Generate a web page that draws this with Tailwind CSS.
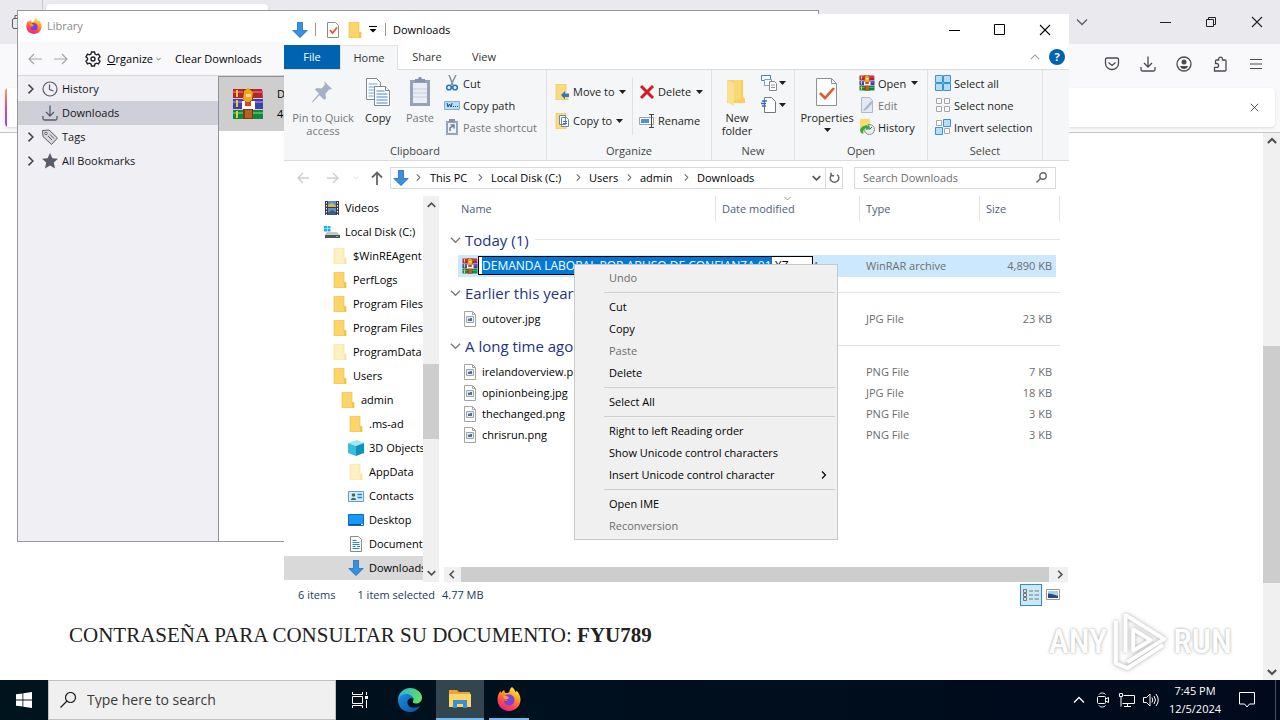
<!DOCTYPE html>
<html lang="en">
<head>
  <meta charset="UTF-8" />
  <meta name="viewport" content="width=device-width, initial-scale=1.0" />
  <title>Desktop</title>
  <script src="https://cdn.jsdelivr.net/npm/@tailwindcss/browser@4"></script>
</head>
<body class="h-screen flex flex-col overflow-hidden bg-white font-['Open_Sans','Noto_Sans',sans-serif] text-[11px] leading-4 text-black">

<!-- Shared icons -->
<svg class="absolute w-0 h-0" aria-hidden="true">
  <defs><linearGradient id="ff" x1=".8" y1="0" x2=".3" y2="1"><stop offset="0" stop-color="#fff04a"/><stop offset=".4" stop-color="#ff9a1f"/><stop offset=".7" stop-color="#ff4a4a"/><stop offset="1" stop-color="#e8228f"/></linearGradient></defs>
  <symbol id="folder" viewBox="0 0 16 16"><path d="M2 0h10v11l2-1v6H2z" fill="#fbd568"/><path d="M2 0h10v11l2-1v6H2z" fill="none" stroke="#efc14c" stroke-width=".7"/><path d="M12 10.500l2-.8V16h-2z" fill="#f2c24d"/></symbol>
  <symbol id="folder-pale" viewBox="0 0 16 16"><path d="M2 0h10v11l2-1v6H2z" fill="#fdf0c0" stroke="#f5e2a0" stroke-width=".7"/><path d="M12 10.500l2-.8V16h-2z" fill="#f9e4a5"/></symbol>
  <symbol id="down-arrow" viewBox="0 0 16 16"><path d="M5 0h6v8h5l-8 8-8-8h5z" fill="#3b8fdc"/><path d="M5.500.5h5v8H15L8 15.300 1 8.500h4.500z" fill="none" stroke="#2f7fca" stroke-width=".8"/></symbol>
  <symbol id="rar" viewBox="0 0 32 32">
    <path d="M1 1h29l1 9H1z" fill="#b3242f"/><path d="M1 3h30v2H1z" fill="#df5350"/>
    <path d="M1 11h30v10H1z" fill="#4040a8"/><path d="M1 13h30v2H1z" fill="#7474d8"/>
    <path d="M1 22h30v9H1z" fill="#14853c"/><path d="M1 24h30v2H1z" fill="#3fbb5a"/>
    <path d="M4 2h2v7H4zM4 12h2v7H4zM4 23h2v7H4z" fill="#f5c93e"/>
    <path d="M11 1h10v30H11z" fill="#7a3a18"/><path d="M12 3l4-3 5 4-1 8-4 3-5-3z" fill="#f5a31f"/><path d="M14 6h5v3h-5z" fill="#ffe28a"/>
    <path d="M10 13h3v5h6v-5h4v8H10z" fill="#fff"/><path d="M13 14h6v4h-6z" fill="#cf4a20"/><path d="M13 22h7v8h-7z" fill="#b8601f"/>
  </symbol>
  <symbol id="pic" viewBox="0 0 16 16"><path d="M2.500.5h8l3 3v12h-11z" fill="#fff" stroke="#a4a4a4"/><path d="M10.500.5v3h3" fill="none" stroke="#a4a4a4"/><path d="M4.500 5.500h7v6h-7z" fill="#e8eef5" stroke="#9aa3b0"/><path d="M6 7h4v3H6z" fill="#56708d"/><path d="M6 7h2v1H6z" fill="#a8c8e8"/></symbol>
  <symbol id="caret" viewBox="0 0 7 4"><path d="M0 0h7L3.500 4z" fill="currentColor"/></symbol>
  <symbol id="chev-r" viewBox="0 0 8 8"><path d="M2 .5L5.500 4 2 7.500" fill="none" stroke="currentColor" stroke-width="1.200"/></symbol>
  <symbol id="chev-d" viewBox="0 0 12 8"><path d="M1 1.500l5 5 5-5" fill="none" stroke="currentColor" stroke-width="1.300"/></symbol>
  <symbol id="chev-u" viewBox="0 0 12 8"><path d="M1 6.500l5-5 5 5" fill="none" stroke="currentColor" stroke-width="1.300"/></symbol>
  <symbol id="close" viewBox="0 0 12 12"><path d="M1 1l10 10M11 1L1 11" stroke="currentColor" stroke-width="1.100"/></symbol>
  <symbol id="download" viewBox="0 0 16 16"><path d="M8 .5v10M4 7l4 4 4-4M1 11v2.500a1.500 1.500 0 001.500 1.500h11a1.500 1.500 0 001.500-1.500V11" fill="none" stroke="currentColor" stroke-width="1.300"/></symbol>
  <symbol id="firefox" viewBox="0 0 24 24">
    <path d="M15 0c2 2 3 3 3.500 5 1-.3 1-1 1-1.500C22 6 23.500 9 23.500 12.500 23.500 19 18.500 24 12 24S.5 19 .5 12.500c0-3.500 1-6.500 3-8.500 0 1 .3 1.700.8 2 .6-1.400 1.700-2.500 3-3 0 1.400.4 2.300 1.300 3 2 .2 2.400-.3 3.800-1 0-2 .8-4 2.600-5z" fill="url(#ff)"/>
    <path d="M9 8c4-1.500 8.500.5 8.500 5a5.300 5.300 0 01-10.600.5c1.500 1 3.300.5 4.100-.5-2.500 0-3.500-1.500-5-2.500 1.200-.2 2.200-1 3-2.500z" fill="#7d3fe0"/><path d="M6 9c2-.5 4 0 6 1.500-1 2-3 2-5 1z" fill="#ffa32b"/>
  </symbol>
</svg>

<main class="relative flex-1 min-h-0 flex flex-col">

  <!-- Browser behind everything -->
  <div class="h-11 bg-[#eaeaee] flex items-stretch text-[#5b5b66]">
    <div class="w-[43px] border-r border-[#c9c9cf] flex items-center pl-3"><svg class="w-3 h-4" viewBox="0 0 12 16" fill="none" stroke="currentColor"><rect x=".5" y="4.500" width="10" height="10" rx="1.500"/><path d="M3 4V1.500h8"/></svg></div>
    <div class="ml-[3px] mt-1 w-[222px] rounded bg-white shadow"></div>
    <div class="ml-auto flex items-center pr-[17px] text-[#222]">
      <button aria-label="List all tabs" class="mr-[72px]"><svg class="w-3 h-2 text-[#5b5b66]"><use href="#chev-d"/></svg></button>
      <button aria-label="Minimize" class="mr-[34px]"><svg class="w-[11px] h-3" viewBox="0 0 11 12"><path d="M0 6.500h11" stroke="currentColor"/></svg></button>
      <button aria-label="Restore" class="mr-[34px]"><svg class="w-3 h-3" viewBox="0 0 12 12" fill="none" stroke="currentColor"><path d="M1.500 3.500h7v7h-7zM3.500 3.500v-2h7v7h-2"/></svg></button>
      <button aria-label="Close"><svg class="w-3 h-3"><use href="#close"/></svg></button>
    </div>
  </div>
  <div class="h-11 shrink-0 bg-[#f9f9fb] flex items-center justify-end gap-5 pr-4 pb-1 text-[#4a4a52]">
    <button aria-label="Pocket"><svg class="w-4 h-4" viewBox="0 0 16 16" fill="none" stroke="currentColor" stroke-width="1.300"><path d="M3 2h10a1.500 1.500 0 011.500 1.500V7.500a6.500 6 0 01-13 0v-4A1.500 1.500 0 013 2zM4.500 6.500L8 9.500l3.500-3"/></svg></button>
    <button aria-label="Downloads"><svg class="w-4 h-4"><use href="#download"/></svg></button>
    <button aria-label="Account"><svg class="w-4 h-4" viewBox="0 0 16 16"><circle cx="8" cy="8" r="7" fill="none" stroke="currentColor" stroke-width="1.300"/><circle cx="8" cy="6" r="2.500" fill="currentColor"/><path d="M4 10h8c-.5 2-2 3-4 3s-3.500-1-4-3z" fill="currentColor"/></svg></button>
    <button aria-label="Extensions"><svg class="w-4 h-4" viewBox="0 0 16 16" fill="none" stroke="currentColor" stroke-width="1.300"><path d="M2.500 15H13a1 1 0 001-1V5a1 1 0 00-1-1h-2.500V3a1.900 1.900 0 00-3.800 0v1H4.500a1 1 0 00-1 1v2.500h1.200a1.900 1.900 0 010 3.800H2.500z"/></svg></button>
    <button aria-label="Menu"><svg class="w-4 h-4" viewBox="0 0 16 16" stroke="currentColor" stroke-width="1.200"><path d="M2 3.500h12M2 8h12M2 12.500h12"/></svg></button>
  </div>
  <div class="h-[45px] shrink-0 bg-[#f9f9fb] border-b border-[#c4c4c8] pl-[5px] pr-[5px]">
    <div class="h-[39px] flex items-stretch bg-white rounded shadow overflow-hidden text-[#333]">
      <span class="w-[2px] bg-linear-to-b from-[#ff9a5a] via-[#e0409a] to-[#9a3fd8]"></span>
      <button aria-label="Dismiss" class="ml-auto mr-4"><svg class="w-[9px] h-[9px]"><use href="#close"/></svg></button>
    </div>
  </div>
  <div class="flex-1 min-h-0 flex">
    <article class="flex-1 flex items-end pl-[69px] pb-[33px] font-['Liberation_Serif',serif] text-[21px] leading-6 text-[#222]">
      <p>CONTRASEÑA PARA CONSULTAR SU DOCUMENTO: <b>FYU789</b></p>
    </article>
    <div class="w-[17px] bg-[#f0f0f0] flex flex-col items-center py-1 text-[#505050]">
      <svg class="w-[10px] h-2" viewBox="0 0 12 8"><path d="M1 6.500l5-5 5 5" fill="none" stroke="currentColor" stroke-width="2.500"/></svg>
      <div class="mt-[201px] w-full h-[237px] bg-[#cdcdcd]"></div>
      <svg class="mt-auto w-[10px] h-2" viewBox="0 0 12 8"><path d="M1 1.500l5 5 5-5" fill="none" stroke="currentColor" stroke-width="2.500"/></svg>
    </div>
  </div>

  <!-- Library window -->
  <section class="absolute left-[17px] top-[10px] w-[802px] h-[532px] border border-[#96969c] bg-white flex flex-col">
    <header class="h-[31px] shrink-0 flex items-center gap-[5px] pl-2 pb-[2px] text-[#8a8a8a]">
      <svg class="w-4 h-4"><use href="#firefox"/></svg><h2>Library</h2>
    </header>
    <div class="h-[34px] shrink-0 bg-[#f9f9fb] border-b border-[#d5d5da] flex items-center pl-[10px]">
      <button aria-label="Back" class="mr-3"><svg class="w-[14px] h-3 text-[#a5a5aa]" viewBox="0 0 14 12" fill="none" stroke="currentColor" stroke-width="1.200"><path d="M14 6H1M6 1L1 6l5 5"/></svg></button>
      <button aria-label="Forward" class="mr-[17px]"><svg class="w-[14px] h-3 text-[#a5a5aa]" viewBox="0 0 14 12" fill="none" stroke="currentColor" stroke-width="1.200"><path d="M0 6h13M8 1l5 5-5 5"/></svg></button>
      <button class="flex items-center mr-[14px]">
        <svg class="w-4 h-4 mr-[6px]" viewBox="0 0 16 16" fill="none" stroke="#222" stroke-width="1.400"><path d="M6.500 1h3l.5 2 1.500.8 2-.6 1.500 2.600-1.500 1.400v1.600l1.500 1.400-1.500 2.600-2-.6-1.500.8-.5 2h-3L6 13l-1.500-.8-2 .6L1 10.200l1.500-1.400V7.200L1 5.800l1.500-2.600 2 .6L6 3z"/><circle cx="8" cy="8" r="2"/></svg>
        <span><u>O</u>rganize</span>
        <svg class="w-[5px] h-1 ml-[3px]"><use href="#chev-d"/></svg>
      </button>
      <button>Clear Downloads</button>
    </div>
    <div class="flex-1 flex min-h-0">
      <ul class="w-[201px] shrink-0 bg-[#f0f0f4] border-r border-[#8f8f96] pt-px text-[#15141a]">
        <li class="h-6 flex items-center pl-2"><svg class="w-[10px] h-[10px] mr-[6px] text-[#444]"><use href="#chev-r"/></svg><svg class="w-4 h-4 mr-1" viewBox="0 0 16 16" fill="none" stroke="#5b5b66" stroke-width="1.200"><circle cx="8" cy="8" r="7"/><path d="M7.500 3.500v5l4 1.500"/></svg>History</li>
        <li class="h-6 flex items-center pl-6 bg-[#cfcfd8]"><svg class="w-4 h-4 mr-1 text-[#5b5b66]"><use href="#download"/></svg>Downloads</li>
        <li class="h-6 flex items-center pl-2"><svg class="w-[10px] h-[10px] mr-[6px] text-[#444]"><use href="#chev-r"/></svg><svg class="w-4 h-4 mr-1" viewBox="0 0 16 16" fill="#d8d8dc" stroke="#5b5b66"><path d="M.5 1.500L7 1l8.500 8-6 6.500L1 7.500z"/><circle cx="4" cy="4.500" r="1.200" fill="#fff"/><path d="M6 7l4 4M8 5.500l4 4"/></svg>Tags</li>
        <li class="h-6 flex items-center pl-2"><svg class="w-[10px] h-[10px] mr-[6px] text-[#444]"><use href="#chev-r"/></svg><svg class="w-4 h-4 mr-1" viewBox="0 0 16 16" fill="#5b5b66"><path d="M8 0l2.400 5.200 5.600.6-4.200 3.800L13 15.500 8 12.600 3 15.500l1.200-5.900L0 5.800l5.600-.6z"/></svg>All Bookmarks</li>
      </ul>
      <div class="flex-1 border-t border-[#8f8f96]">
        <div class="h-[54px] bg-[#cecece] flex items-center pl-[13px] gap-[13px]">
          <svg class="w-8 h-8"><use href="#rar"/></svg>
          <p class="leading-5">DEMANDA<br>4.8 MB</p>
        </div>
      </div>
    </div>
  </section>

  <!-- File Explorer window -->
  <section class="absolute left-[284px] top-[14px] w-[785px] h-[593px] bg-white flex flex-col">
    <header class="h-[31px] shrink-0 flex items-center pl-2">
      <svg class="w-4 h-4"><use href="#down-arrow"/></svg>
      <span class="ml-[7px] h-[13px] border-l border-[#999]"></span>
      <svg class="ml-[9px] w-4 h-4" viewBox="0 0 16 16"><path d="M2.500.5h8l3 3v12h-11z" fill="#fff" stroke="#8c8c8c"/><path d="M5 8l2.500 3L12 5.500" fill="none" stroke="#e0592f" stroke-width="1.800"/></svg>
      <svg class="ml-[6px] w-4 h-4"><use href="#folder"/></svg>
      <svg class="ml-[6px] w-2 h-[7px]" viewBox="0 0 8 7"><path d="M0 .5h8" stroke="#000"/><path d="M.5 3h7L4 6.500z"/></svg>
      <span class="ml-2 h-[13px] border-l border-[#999]"></span>
      <h2 class="ml-[7px]">Downloads</h2>
      <div class="ml-auto flex items-center pr-[18px]">
        <button aria-label="Minimize" class="mr-[34px]"><svg class="w-[11px] h-3" viewBox="0 0 11 12"><path d="M0 6.500h11" stroke="#000"/></svg></button>
        <button aria-label="Maximize" class="mr-[34px]"><svg class="w-[11px] h-[11px]" viewBox="0 0 11 11"><path d="M.5.5h10v10H.5z" fill="none" stroke="#000"/></svg></button>
        <button aria-label="Close"><svg class="w-3 h-3"><use href="#close"/></svg></button>
      </div>
    </header>

    <nav class="h-6 shrink-0 flex text-[#333]">
      <button class="w-14 bg-[#0063b1] text-white">File</button>
      <button class="w-[58px] -mb-px relative bg-[#f5f6f7] border-x border-t border-[#e2e3e4]">Home</button>
      <button class="w-[58px]">Share</button>
      <button class="w-[56px]">View</button>
      <div class="ml-auto flex items-center gap-[9px] pr-1">
        <button aria-label="Collapse ribbon"><svg class="w-[10px] h-2 text-[#999]"><use href="#chev-u"/></svg></button>
        <button class="w-4 h-4 rounded-full bg-[#0063b1] text-white font-bold leading-4" aria-label="Help">?</button>
      </div>
    </nav>

    <!-- Ribbon -->
    <div class="h-[92px] shrink-0 bg-[#f5f6f7] border-y border-[#dadbdc] flex leading-[13px] text-[#1e1e1e] whitespace-nowrap">
      <div class="w-[263px] border-r border-[#e0e1e2] flex flex-col">
        <div class="h-[73px] flex pl-1 pt-[2px]">
          <button class="w-[70px] flex flex-col items-center justify-start text-[#777]">
            <svg class="w-8 h-8 mt-[5px] mb-[2px]" viewBox="0 0 32 32" fill="#a4b1c4"><path d="M17 4l8 8-3 .8-3.500 4 .5 5-2 1-4.500-4.500L6 25l-1 .5.5-1.500L12 16.500 8 12.500l1.500-1.500 5 .5 3.500-4z"/></svg>
            <span>Pin to Quick<br>access</span>
          </button>
          <button class="w-10 flex flex-col items-center justify-start">
            <svg class="w-8 h-8 mt-[5px] mb-[2px]" viewBox="0 0 32 32" fill="#fff" stroke="#7f8792"><path d="M4.500 1.500h10l4 4v17h-14z"/><path d="M6.500 7h9M6.500 10h9M6.500 13h9M6.500 16h9M6.500 19h5" stroke="#6aa3dd"/><path d="M12.500 9.500h11l4 4v15h-15z"/><path d="M23.500 9.500v4h4" /><path d="M14.500 14h8M14.500 17h11M14.500 20h11M14.500 23h11M14.500 26h11" stroke="#3c84d0"/></svg>
            <span>Copy</span>
          </button>
          <button class="w-11 flex flex-col items-center justify-start text-[#777]">
            <svg class="w-8 h-8 mt-[5px] mb-[2px]" viewBox="0 0 32 32"><path d="M6 3h20v26H6z" fill="#95a3b8"/><path d="M9 6h14v20H9z" fill="#e9edf5"/><path d="M11 5h10V2h-3l-1-2h-2l-1 2h-3z" fill="#8593a8"/><path d="M9 12h14M9 16h14M9 20h14" stroke="#c5cede"/></svg>
            <span>Paste</span>
          </button>
          <div class="flex flex-col pl-[2px]">
            <button class="h-[22px] flex items-center gap-[3px]"><svg class="w-4 h-4" viewBox="0 0 16 16" fill="none"><path d="M5 0l4 10M12 0L7 10" stroke="#8a8f98" stroke-width="1.500"/><circle cx="5" cy="12.500" r="2.300" stroke="#2779bd" stroke-width="1.600"/><circle cx="11" cy="12.500" r="2.300" stroke="#2779bd" stroke-width="1.600"/></svg>Cut</button>
            <button class="h-[22px] flex items-center gap-[3px]"><svg class="w-4 h-4" viewBox="0 0 16 16"><path d="M.5 4.500h15v8H.5z" fill="#b9dcf5" stroke="#7fb1dc"/><path d="M3 6l1 4 1.500-3L7 10l1-4" fill="none" stroke="#1b4d80"/><path d="M9 9.500h1M11 9.500h1M13 9.500h1" stroke="#1b4d80"/></svg>Copy path</button>
            <button class="h-[22px] flex items-center gap-[3px] text-[#777]"><svg class="w-4 h-4" viewBox="0 0 16 16"><path d="M2 2h12v14H2z" fill="#95a3b8"/><path d="M4 4h8v10H4z" fill="#eef1f7"/><path d="M5 0h6v3H5z" fill="#8593a8"/><path d="M6 12V9l3-2M6.500 6H10v3.500" fill="none" stroke="#6d7f9b" stroke-width="1.500"/></svg>Paste shortcut</button>
          </div>
        </div>
        <span class="text-center pt-px text-[#444]">Clipboard</span>
      </div>
      <div class="w-[165px] border-r border-[#e0e1e2] flex flex-col">
        <div class="h-[73px] flex pt-[7px] pl-2">
          <div class="w-[78px] border-r border-[#e0e1e2] flex flex-col h-[58px]">
            <button class="h-[29px] flex items-center gap-[2px]"><svg class="w-4 h-4" viewBox="0 0 16 16"><path d="M1 0h10v11l2-1v6H1z" fill="#fbdc7c" stroke="#efc14c" stroke-width=".6"/><path d="M6 11l4-4v2.500h4v3.500h-4v2.500z" fill="#3279bd"/></svg>Move to<svg class="w-[7px] h-1 ml-[2px]"><use href="#caret"/></svg></button>
            <button class="h-[29px] flex items-center gap-[2px]"><svg class="w-4 h-4" viewBox="0 0 16 16"><path d="M1 0h10v16H1z" fill="#fbdc7c" stroke="#efc14c" stroke-width=".6"/><path d="M4.500 2.500h6v9h-6zM6.500 4.500h5l2 2v7h-7z" fill="#fff" stroke="#6a87aa"/><path d="M8 8.500h4M8 10.500h4" stroke="#3279bd"/></svg>Copy to<svg class="w-[7px] h-1 ml-[2px]"><use href="#caret"/></svg></button>
          </div>
          <div class="flex flex-col pl-[6px]">
            <button class="h-[29px] flex items-center gap-[3px]"><svg class="w-4 h-4" viewBox="0 0 16 16"><path d="M2 2l12 12M14 2L2 14" stroke="#d9181f" stroke-width="3"/></svg>Delete<svg class="w-[7px] h-1 ml-[2px]"><use href="#caret"/></svg></button>
            <button class="h-[29px] flex items-center gap-[3px]"><svg class="w-4 h-4" viewBox="0 0 16 16" fill="none"><path d="M.5 4.500h14v7H.5z" fill="#fff" stroke="#9aa3ad"/><path d="M2 6h8v4H2z" fill="#4695da"/><path d="M12.500 1.500v13M10 1.500h5M10 14.500h5" stroke="#444"/></svg>Rename</button>
          </div>
        </div>
        <span class="text-center pt-px text-[#444]">Organize</span>
      </div>
      <div class="w-[83px] border-r border-[#e0e1e2] flex flex-col">
        <div class="h-[73px] flex pt-[2px] pl-1">
          <button class="w-[42px] flex flex-col items-center justify-start">
            <svg class="w-8 h-8 mt-[5px] mb-[2px]" viewBox="0 0 32 32"><path d="M6 3h16v16l2 3v4H6z" fill="#f8cf5f"/><path d="M6 3l7 3v23l-7-4z" fill="#fbe092"/><path d="M13 3h7v20h-7z" fill="#fad871"/></svg>
            <span>New<br>folder</span>
          </button>
          <div class="flex flex-col pl-[3px]">
            <button aria-label="New item" class="h-[22px] flex items-center gap-[2px]"><svg class="w-4 h-4" viewBox="0 0 16 16" fill="#fff"><path d="M.5.5h9v5h-9z" stroke="#3a86c8" /><path d="M3.500 4.500h7v6h-7z" stroke="#6aa3dd"/><path d="M8.500 6.500h5l2 2v7h-7z" stroke="#888"/><path d="M10 10h4M10 12.500h4" stroke="#999"/></svg><svg class="w-[7px] h-1"><use href="#caret"/></svg></button>
            <button aria-label="Easy access" class="h-[22px] flex items-center gap-[2px]"><svg class="w-4 h-4" viewBox="0 0 16 16" fill="#fff"><path d="M3.500.5h7l4 4v11h-11z" stroke="#777"/><path d="M1 4h5M0 6.500h5M1 9h4" stroke="#2d72b8" stroke-width="1.400"/></svg><svg class="w-[7px] h-1"><use href="#caret"/></svg></button>
          </div>
        </div>
        <span class="text-center pt-px text-[#444]">New</span>
      </div>
      <div class="w-[133px] border-r border-[#e0e1e2] flex flex-col">
        <div class="h-[73px] flex pt-[2px] pl-1">
          <button class="w-[56px] flex flex-col items-center justify-start">
            <svg class="w-8 h-8 mt-[5px] mb-[2px]" viewBox="0 0 32 32"><path d="M5.500 1.500h15l5 5v22h-20z" fill="#fff" stroke="#909090"/><path d="M20.500 1.500v5h5" fill="none" stroke="#909090"/><path d="M9 16l5 5 9-10" fill="none" stroke="#e0592f" stroke-width="2.600"/></svg>
            <span>Properties</span>
            <svg class="w-[7px] h-1 mt-1"><use href="#caret"/></svg>
          </button>
          <div class="flex flex-col pl-1">
            <button class="h-[22px] flex items-center gap-[3px]"><svg class="w-4 h-4"><use href="#rar"/></svg>Open<svg class="w-[7px] h-1 ml-[2px]"><use href="#caret"/></svg></button>
            <button class="h-[22px] flex items-center gap-[3px] text-[#777]"><svg class="w-4 h-4" viewBox="0 0 16 16"><path d="M2.500.5h8l3 3v12h-11z" fill="#e3eaf5" stroke="#a9b9d0"/><path d="M5 12l7-8 2 2-7 7-3 1z" fill="#a9b9d0"/></svg>Edit</button>
            <button class="h-[22px] flex items-center gap-[3px]"><svg class="w-4 h-4" viewBox="0 0 16 16"><path d="M1 0h10v14H1z" fill="#fbdc6a"/><circle cx="10.500" cy="10.500" r="5" fill="#e8eef0" stroke="#8a9299"/><path d="M10.500 10.500L13 8" stroke="#555"/><path d="M1 11a6 6 0 018-4l1-2 1 5-4.500 1 1-2a4 4 0 00-3 6 5 5 0 01-3.500-4z" fill="#2fa84a"/></svg>History</button>
          </div>
        </div>
        <span class="text-center pt-px text-[#444]">Open</span>
      </div>
      <div class="w-[115px] border-r border-[#e0e1e2] flex flex-col">
        <div class="h-[73px] flex flex-col pt-[2px] pl-[7px]">
          <button class="h-[22px] flex items-center gap-[3px]"><svg class="w-4 h-4" viewBox="0 0 16 16" fill="#b5dcf8" stroke="#3a92d8"><path d="M.5.5h7v7h-7zM8.500.5h7v7h-7zM.5 8.500h7v7h-7zM8.500 8.500h7v7h-7z"/></svg>Select all</button>
          <button class="h-[22px] flex items-center gap-[3px]"><svg class="w-4 h-4" viewBox="0 0 16 16" fill="#fff" stroke="#a8a8a8"><path d="M1.500 1.500h5v5h-5zM9.500 1.500h5v5h-5zM1.500 9.500h5v5h-5zM9.500 9.500h5v5h-5z"/></svg>Select none</button>
          <button class="h-[22px] flex items-center gap-[3px]"><svg class="w-4 h-4" viewBox="0 0 16 16" fill="#b5dcf8" stroke="#3a92d8"><path d="M8.500.5h7v7h-7zM.5 8.500h7v7h-7z"/><path d="M1.500 1.500h5v5h-5zM9.500 9.500h5v5h-5z" fill="#fff" stroke="#a8a8a8"/></svg>Invert selection</button>
        </div>
        <span class="text-center pt-px text-[#444]">Select</span>
      </div>
    </div>

    <!-- Address bar -->
    <div class="h-[35px] shrink-0 flex items-center pb-[2px]">
      <div class="w-[106px] flex items-center pl-[13px] text-[#d0d0d0]">
        <button aria-label="Back"><svg class="w-3 h-3" viewBox="0 0 12 12" fill="none" stroke="currentColor" stroke-width="1.500"><path d="M12 6H1M6 1L1 6l5 5"/></svg></button>
        <button aria-label="Forward" class="ml-[18px]"><svg class="w-3 h-3" viewBox="0 0 12 12" fill="none" stroke="currentColor" stroke-width="1.500"><path d="M0 6h11M6 1l5 5-5 5"/></svg></button>
        <button aria-label="Recent locations" class="ml-[14px]"><svg class="w-[6px] h-1"><use href="#chev-d"/></svg></button>
        <button aria-label="Up" class="ml-3"><svg class="w-3 h-[14px] text-[#666]" viewBox="0 0 12 14" fill="none" stroke="currentColor" stroke-width="1.800"><path d="M6 14V2M1 6.500l5-5 5 5"/></svg></button>
      </div>
      <div class="w-[453px] h-[22px] border border-[#d9d9d9] flex items-center pl-[2px]">
        <svg class="w-4 h-4"><use href="#down-arrow"/></svg>
        <svg class="w-[7px] h-[7px] ml-[6px] mr-2 text-[#666]"><use href="#chev-r"/></svg>
        <a href="#" class="w-[40px]">This PC</a>
        <svg class="w-[7px] h-[7px] mx-[7px] text-[#666]"><use href="#chev-r"/></svg>
        <a href="#" class="w-[77px]">Local Disk (C:)</a>
        <svg class="w-[7px] h-[7px] mx-[7px] text-[#666]"><use href="#chev-r"/></svg>
        <a href="#" class="w-[30px]">Users</a>
        <svg class="w-[7px] h-[7px] mx-[7px] text-[#666]"><use href="#chev-r"/></svg>
        <a href="#" class="w-[36px]">admin</a>
        <svg class="w-[7px] h-[7px] mx-[7px] text-[#666]"><use href="#chev-r"/></svg>
        <a href="#">Downloads</a>
        <button aria-label="Previous locations" class="ml-auto mr-1 text-[#555]"><svg class="w-[9px] h-[6px]" viewBox="0 0 12 8"><path d="M1 1.500l5 5 5-5" fill="none" stroke="currentColor" stroke-width="2.200"/></svg></button>
        <button aria-label="Refresh" class="h-full w-[17px] border-l border-[#d9d9d9] flex items-center justify-center"><svg class="w-[11px] h-3" viewBox="0 0 11 12" fill="none" stroke="#666" stroke-width="1.500"><path d="M3 2.500a4.300 4.300 0 105 0M2 .8v3h3.200"/></svg></button>
      </div>
      <label class="ml-[11px] mr-[13px] flex-1 h-[22px] border border-[#d9d9d9] flex items-center pl-2 pr-2">
        <input type="text" aria-label="Search Downloads" placeholder="Search Downloads" class="flex-1 min-w-0 outline-none placeholder:text-[#6d6d6d]">
        <svg class="w-[11px] h-[11px]" viewBox="0 0 11 11" fill="none" stroke="#666" stroke-width="1.400"><circle cx="7" cy="4" r="3.200"/><path d="M4.500 6.500L.5 10.500"/></svg>
      </label>
    </div>

    <div class="flex-1 min-h-0 flex">
      <!-- Navigation tree -->
      <ul class="w-[139px] shrink-0 overflow-hidden whitespace-nowrap">
        <li class="h-6 flex items-center gap-[5px] pl-10"><svg class="w-4 h-4 shrink-0" viewBox="0 0 16 16"><path d="M1 1h14v14H1z" fill="#333c48"/><path d="M4 1h8v6H4zM4 8h8v7H4z" fill="#5b93c8"/><path d="M4 5l4-2 4 3v1H4z" fill="#e0b548"/><path d="M4 13l4-3 4 2v3H4z" fill="#3c5b7e"/><path d="M2.500 2v13M13.500 2v13" stroke="#fff" stroke-dasharray="1.500 1.500"/></svg>Videos</li>
        <li class="h-6 flex items-center gap-[5px] pl-10"><svg class="w-4 h-4 shrink-0" viewBox="0 0 16 16"><path d="M0 2h3v2.500H0zM3.500 2h3v2.500h-3zM0 5h3v2.500H0zM3.500 5h3v2.500h-3z" fill="#19b1e8"/><path d="M3 8h10l3 3H1z" fill="#c3c8cd"/><path d="M1 11h15v3H1z" fill="#4d5359"/><path d="M12 12h2v1h-2z" fill="#4bdc5a"/></svg>Local Disk (C:)</li>
        <li class="h-6 flex items-center gap-[5px] pl-12"><svg class="w-4 h-4 shrink-0"><use href="#folder-pale"/></svg>$WinREAgent</li>
        <li class="h-6 flex items-center gap-[5px] pl-12"><svg class="w-4 h-4 shrink-0"><use href="#folder"/></svg>PerfLogs</li>
        <li class="h-6 flex items-center gap-[5px] pl-12"><svg class="w-4 h-4 shrink-0"><use href="#folder"/></svg>Program Files</li>
        <li class="h-6 flex items-center gap-[5px] pl-12"><svg class="w-4 h-4 shrink-0"><use href="#folder"/></svg>Program Files (x86)</li>
        <li class="h-6 flex items-center gap-[5px] pl-12"><svg class="w-4 h-4 shrink-0"><use href="#folder-pale"/></svg>ProgramData</li>
        <li class="h-6 flex items-center gap-[5px] pl-12"><svg class="w-4 h-4 shrink-0"><use href="#folder"/></svg>Users</li>
        <li class="h-6 flex items-center gap-[5px] pl-14"><svg class="w-4 h-4 shrink-0"><use href="#folder"/></svg>admin</li>
        <li class="h-6 flex items-center gap-[5px] pl-16"><svg class="w-4 h-4 shrink-0"><use href="#folder"/></svg>.ms-ad</li>
        <li class="h-6 flex items-center gap-[5px] pl-16"><svg class="w-4 h-4 shrink-0" viewBox="0 0 16 16"><path d="M0 3l9-3 7 3-8 3z" fill="#a5e6f2"/><path d="M0 3l8 3v10l-8-3z" fill="#36bfdc"/><path d="M8 6l8-3v10l-8 3z" fill="#0e93ba"/></svg>3D Objects</li>
        <li class="h-6 flex items-center gap-[5px] pl-16"><svg class="w-4 h-4 shrink-0"><use href="#folder-pale"/></svg>AppData</li>
        <li class="h-6 flex items-center gap-[5px] pl-16"><svg class="w-4 h-4 shrink-0" viewBox="0 0 16 16"><path d="M.5 3.500h15v10H.5z" fill="#d7ebfa" stroke="#5f9fd0"/><path d="M3 12c0-3 5-3 5 0z" fill="#3d6e5a"/><circle cx="5.500" cy="7" r="1.800" fill="#3d6e5a"/><path d="M9.500 6.500h4.500M9.500 9.500h4.500" stroke="#2b7ec2" stroke-width="1.400"/></svg>Contacts</li>
        <li class="h-6 flex items-center gap-[5px] pl-16"><svg class="w-4 h-4 shrink-0" viewBox="0 0 16 16"><path d="M.5 2.500h15v11H.5z" fill="#1a98f5" stroke="#0d6ab8"/><path d="M1 12.500h12" stroke="#0a4d90"/><path d="M13 12.500h2" stroke="#fff"/></svg>Desktop</li>
        <li class="h-6 flex items-center gap-[5px] pl-16"><svg class="w-4 h-4 shrink-0" viewBox="0 0 16 16"><path d="M2.500.5h8l3 3v12h-11z" fill="#fff" stroke="#8c8c8c"/><path d="M4.500 4.500h4M4.500 6.500h7M4.500 8.500h7M4.500 10.500h3M4.500 12.500h7M9 10.500h3" stroke="#2b86c8"/></svg>Documents</li>
        <li class="h-6 flex items-center gap-[5px] pl-16 bg-[#d9d9d9]"><svg class="w-4 h-4 shrink-0"><use href="#down-arrow"/></svg>Downloads</li>
      </ul>
      <div class="w-4 shrink-0 bg-[#f0f0f0] flex flex-col items-center py-[5px] text-[#505050]">
        <svg class="w-[9px] h-2" viewBox="0 0 12 8"><path d="M1 6.500l5-5 5 5" fill="none" stroke="currentColor" stroke-width="2.200"/></svg>
        <div class="mt-[155px] w-full h-[75px] bg-[#cdcdcd]"></div>
        <svg class="mt-auto w-[9px] h-2" viewBox="0 0 12 8"><path d="M1 1.500l5 5 5-5" fill="none" stroke="currentColor" stroke-width="2.200"/></svg>
      </div>

      <!-- File list -->
      <div class="flex-1 min-w-0 flex flex-col pl-[5px]">
        <div class="flex-1 pl-[14px] text-[#6d6d6d]">
          <div class="relative h-7 grid grid-cols-[258px_144px_120px_80px] pb-[3px] text-[#4c607a]">
            <span class="pl-[3px] border-r border-[#e5e5e5] leading-[26px]">Name</span>
            <span class="pl-[6px] border-r border-[#e5e5e5] leading-[26px]">Date modified</span>
            <span class="pl-[6px] border-r border-[#e5e5e5] leading-[26px]">Type</span>
            <span class="pl-[6px] border-r border-[#e5e5e5] leading-[26px]">Size</span>
            <svg class="absolute left-[326px] top-0 w-[7px] h-[5px] text-[#777]"><use href="#chev-d"/></svg>
          </div>

          <div class="h-[31px] flex items-center -ml-2 mr-[9px] text-[15px] text-[#1e3287]"><svg class="w-[11px] h-2 mr-1 text-[#777]"><use href="#chev-d"/></svg>Today (1)<span class="flex-1 ml-[6px] border-t border-[#dfe3ea]"></span></div>
          <div class="relative h-[22px] grid grid-cols-[258px_144px_120px_76px] items-center bg-[#cce8ff] w-[598px]">
            <span class="flex items-center pl-1 text-black"><svg class="w-4 h-4"><use href="#rar"/></svg></span>
            <span class="pl-[6px]">12/5/2024 7:45 PM</span>
            <span class="pl-[6px]">WinRAR archive</span>
            <span class="text-right pr-1">4,890 KB</span>
            <input id="rename" type="text" aria-label="File name" value="DEMANDA LABORAL POR ABUSO DE CONFIANZA 01.XZ" class="absolute left-5 top-px w-[335px] h-[19px] border border-black bg-white px-[3px] text-[12px] text-black outline-none selection:bg-[#0078d7] selection:text-white">
          </div>

          <div class="h-[31px] flex items-center -ml-2 mr-[9px] text-[15px] text-[#1e3287]"><svg class="w-[11px] h-2 mr-1 text-[#777]"><use href="#chev-d"/></svg>Earlier this year (1)<span class="flex-1 ml-[6px] border-t border-[#dfe3ea]"></span></div>
          <div class="h-[22px] grid grid-cols-[258px_144px_120px_76px] items-center w-[598px]">
            <span class="flex items-center gap-1 pl-1 text-black"><svg class="w-4 h-4"><use href="#pic"/></svg>outover.jpg</span><span></span>
            <span class="pl-[6px]">JPG File</span><span class="text-right pr-1">23 KB</span>
          </div>

          <div class="h-[31px] flex items-center -ml-2 mr-[9px] text-[15px] text-[#1e3287]"><svg class="w-[11px] h-2 mr-1 text-[#777]"><use href="#chev-d"/></svg>A long time ago (4)<span class="flex-1 ml-[6px] border-t border-[#dfe3ea]"></span></div>
          <div class="h-[21px] grid grid-cols-[258px_144px_120px_76px] items-center w-[598px]">
            <span class="flex items-center gap-1 pl-1 text-black"><svg class="w-4 h-4"><use href="#pic"/></svg>irelandoverview.png</span><span></span>
            <span class="pl-[6px]">PNG File</span><span class="text-right pr-1">7 KB</span>
          </div>
          <div class="h-[21px] grid grid-cols-[258px_144px_120px_76px] items-center w-[598px]">
            <span class="flex items-center gap-1 pl-1 text-black"><svg class="w-4 h-4"><use href="#pic"/></svg>opinionbeing.jpg</span><span></span>
            <span class="pl-[6px]">JPG File</span><span class="text-right pr-1">18 KB</span>
          </div>
          <div class="h-[21px] grid grid-cols-[258px_144px_120px_76px] items-center w-[598px]">
            <span class="flex items-center gap-1 pl-1 text-black"><svg class="w-4 h-4"><use href="#pic"/></svg>thechanged.png</span><span></span>
            <span class="pl-[6px]">PNG File</span><span class="text-right pr-1">3 KB</span>
          </div>
          <div class="h-[21px] grid grid-cols-[258px_144px_120px_76px] items-center w-[598px]">
            <span class="flex items-center gap-1 pl-1 text-black"><svg class="w-4 h-4"><use href="#pic"/></svg>chrisrun.png</span><span></span>
            <span class="pl-[6px]">PNG File</span><span class="text-right pr-1">3 KB</span>
          </div>
        </div>
        <div class="h-[15px] mr-px shrink-0 bg-[#f0f0f0] flex items-center px-1 text-[#505050]">
          <svg class="w-2 h-[9px]" viewBox="0 0 8 12"><path d="M6.500 1l-5 5 5 5" fill="none" stroke="currentColor" stroke-width="2.200"/></svg>
          <div class="flex-1 h-full ml-[5px] mr-[7px] bg-[#cdcdcd]"></div>
          <svg class="w-2 h-[9px]" viewBox="0 0 8 12"><path d="M1.500 1l5 5-5 5" fill="none" stroke="currentColor" stroke-width="2.200"/></svg>
        </div>
      </div>
    </div>

    <footer class="h-[25px] shrink-0 flex items-center pl-[14px] pr-[9px] text-[#1e395b]">
      <span class="mr-[22px]">6 items</span><span class="mr-[7px]">1 item selected</span><span>4.77 MB</span>
      <button aria-label="Details view" class="ml-auto w-[22px] h-[22px] bg-[#cce8f6] border border-[#2a8dd4] flex items-center justify-center"><svg class="w-4 h-3" viewBox="0 0 16 12" fill="none" stroke="#777"><path d="M.5.5h3v3h-3zM.5 4.500h3v3h-3zM.5 8.500h3v3h-3zM6 2h4M11.500 2H16M6 6h4M11.500 6H16M6 10h4M11.500 10H16"/></svg></button>
      <button aria-label="Large icons" class="ml-1"><svg class="w-[14px] h-[11px]" viewBox="0 0 14 11"><path d="M.5.5h13v10H.5z" fill="#fff" stroke="#999"/><path d="M2 2h10v7H2z" fill="#a9cff2"/><path d="M2 4.500l4 .5 6 2v2H2z" fill="#2b4d7a"/></svg></button>
    </footer>
  </section>

  <!-- Context menu -->
  <div role="menu" class="absolute left-[574px] top-[264px] w-[264px] border border-[#c8c8c8] bg-[#f0f0f0] py-[2px] flex flex-col">
    <button disabled class="h-[22px] text-left pl-[34px] text-[#6d6d6d]">Undo</button>
    <hr class="my-[3px] ml-[29px] mr-[2px] border-[#cfcfcf]">
    <button class="h-[22px] text-left pl-[34px]">Cut</button>
    <button class="h-[22px] text-left pl-[34px]">Copy</button>
    <button disabled class="h-[22px] text-left pl-[34px] text-[#6d6d6d]">Paste</button>
    <button class="h-[22px] text-left pl-[34px]">Delete</button>
    <hr class="my-[3px] ml-[29px] mr-[2px] border-[#cfcfcf]">
    <button class="h-[22px] text-left pl-[34px]">Select All</button>
    <hr class="my-[3px] ml-[29px] mr-[2px] border-[#cfcfcf]">
    <button class="h-[22px] text-left pl-[34px]">Right to left Reading order</button>
    <button class="h-[22px] text-left pl-[34px]">Show Unicode control characters</button>
    <button class="h-[22px] flex items-center justify-between pl-[34px] pr-[9px]">Insert Unicode control character<svg class="w-2 h-2"><use href="#chev-r"/></svg></button>
    <hr class="my-[3px] ml-[29px] mr-[2px] border-[#cfcfcf]">
    <button class="h-[22px] text-left pl-[34px]">Open IME</button>
    <button disabled class="h-[22px] text-left pl-[34px] text-[#6d6d6d]">Reconversion</button>
  </div>

  <!-- Watermark -->
  <div class="absolute right-12 bottom-2 flex items-center gap-[5px] font-['Roboto_Condensed','Roboto',sans-serif] text-[34px] leading-[60px] font-medium text-white [text-shadow:0_0_3px_#999]">
    <span>ANY</span>
    <svg class="w-[56px] h-[62px] drop-shadow-[0_0_2px_#aaa]" viewBox="0 0 58 62" fill="none" stroke="#fff" stroke-width="4" stroke-linejoin="round"><path d="M14 3v40M14 4l40 25-38 24M4 10v44l12 5 37-24M22 19v22l18-11z"/></svg>
    <span>RUN</span>
  </div>
</main>

<!-- Taskbar -->
<footer class="h-10 shrink-0 bg-linear-to-r from-[#00141e] to-[#000a1c] flex items-stretch text-white">
  <button aria-label="Start" class="w-12 flex items-center justify-center"><svg class="w-4 h-4" viewBox="0 0 16 16" fill="#fff"><path d="M0 2.300l6.500-.9v6.200H0zM7.300 1.300L16 0v7.600H7.300zM0 8.400h6.500v6.200L0 13.700zM7.300 8.400H16V16l-8.700-1.300z"/></svg></button>
  <label class="w-72 bg-[#f0f0f0] border border-[#c0c0c0] flex items-center pl-[11px] gap-[11px]">
    <svg class="w-4 h-4" viewBox="0 0 16 16" fill="none" stroke="#222" stroke-width="1.200"><circle cx="10.500" cy="5.500" r="5"/><path d="M7 9l-6.500 6.500"/></svg>
    <input type="text" aria-label="Search" placeholder="Type here to search" class="flex-1 min-w-0 text-[14px] outline-none placeholder:text-[#3a3a3a]">
  </label>
  <button aria-label="Task view" class="w-12 flex items-center justify-center"><svg class="w-4 h-4" viewBox="0 0 16 16" fill="none" stroke="#fff"><path d="M.5 4.500h10v7H.5zM.5 0v2.500h10V0M.5 16v-2.500h10V16M14.500 0v3M14.500 8v8"/><path d="M13 4h3v3h-3z" fill="#fff" stroke="none"/></svg></button>
  <button aria-label="Edge" class="w-[52px] flex items-center justify-center"><svg class="w-6 h-6" viewBox="0 0 24 24"><defs><linearGradient id="e1" x1="0" y1="0" x2="1" y2=".3"><stop offset="0" stop-color="#2aa8e0"/><stop offset="1" stop-color="#5ee06a"/></linearGradient><linearGradient id="e2" x1="0" y1="0" x2="1" y2="1"><stop offset="0" stop-color="#1b8fe0"/><stop offset="1" stop-color="#0c4f9e"/></linearGradient></defs><path d="M0 12C0 5 5.500 0 12 0s12 4.500 12 9.500c0 4-3 6-6 6-2.500 0-4-1-3-2.500 1.500-2.500-.5-5-4-5C6 8 2 10 0 12z" fill="url(#e1)"/><path d="M0 12c1-4 5-6 8.500-6 4 0 6.500 2.500 6.500 5-2-2-6 0-5.500 4 .5 5 7 6 12.500 3C20 22 16 24 12 24 5 24 0 19 0 12z" fill="url(#e2)"/></svg></button>
  <button aria-label="File Explorer" class="w-12 flex items-center justify-center bg-[#33454f] border-b-2 border-[#76b9ed]"><svg class="w-[22px] h-[18px]" viewBox="0 0 22 18"><path d="M0 0h8l2 2h11v4H0z" fill="#e8a33a"/><path d="M0 4h22v13H0z" fill="#fcd667"/><path d="M4 10h14v8h-4v-4H8v4H4z" fill="#3e8fd0"/></svg></button>
  <button aria-label="Firefox" class="w-10 mx-[5px] flex items-center justify-center border-b-2 border-[#76b9ed]"><svg class="w-6 h-6"><use href="#firefox"/></svg></button>
  <div class="ml-auto flex items-center text-[11px]">
    <svg class="w-3 h-2"><use href="#chev-u"/></svg>
    <svg class="ml-3 w-3 h-4" viewBox="0 0 12 16" fill="none" stroke="#fff"><rect x=".5" y="4.500" width="8" height="7" rx="1"/><path d="M8.500 7l3-1.500v5l-3-1.500M2 2.500C3.500.5 7 .5 8.500 2.500M2 13.500c1.500 2 5 2 6.500 0"/></svg>
    <svg class="ml-[10px] w-4 h-4" viewBox="0 0 16 16" fill="none" stroke="#fff"><path d="M4.500 3.500h11v8H3.500M8.500 11.500v3M5 14.500h7M.5 1.500h3v3h-3zM2 4.500v10"/></svg>
    <svg class="ml-2 w-4 h-4" viewBox="0 0 16 16" fill="none" stroke="#fff"><path d="M.5 5.500h3L7 2v12l-3.500-3.500h-3zM9 5.500q1.500 2.500 0 5M11 4q3 4 0 8M13 2q4.500 6 0 12"/></svg>
    <p class="ml-2 w-[56px] text-center leading-[18px] whitespace-nowrap">7:45 PM<br>12/5/2024</p>
    <button aria-label="Notifications" class="ml-4"><svg class="w-4 h-4" viewBox="0 0 16 16" fill="none" stroke="#fff"><path d="M.5.5h15v11.500h-5L8 15l-2.500-3h-5z"/></svg></button>
    <span class="ml-[20px] mr-1 h-10 border-l border-[#44505c]"></span>
  </div>
</footer>

<script>
  // keep the file name selected up to its extension while it is being renamed
  const rename = document.getElementById("rename");
  rename.focus();
  rename.setSelectionRange(0, rename.value.lastIndexOf("."));
</script>

</body>
</html>
